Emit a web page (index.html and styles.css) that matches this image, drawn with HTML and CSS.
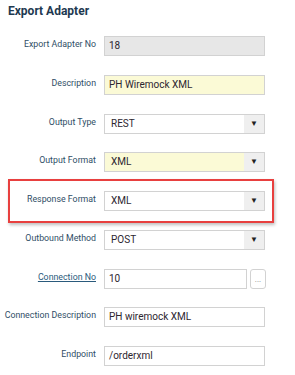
FILE: index.html
```html
<!DOCTYPE html>
<html>
<head>
    <title>Export Adapter</title>
    <link rel="stylesheet" href="styles.css">
</head>
<body>
    <h1 class="title">Export Adapter</h1>

    <div class="form">
        <div class="row">
            <label class="lbl">Export Adapter No</label>
            <div class="field readonly">18</div>
        </div>
        <div class="row">
            <label class="lbl">Description</label>
            <div class="field required">PH Wiremock XML</div>
        </div>
        <div class="row">
            <label class="lbl">Output Type</label>
            <div class="field select"><span class="val">REST</span><span class="arrow">&#9660;</span></div>
        </div>
        <div class="row">
            <label class="lbl">Output Format</label>
            <div class="field select required"><span class="val">XML</span><span class="arrow">&#9660;</span></div>
        </div>
        <div class="row hl">
            <label class="lbl">Response Format</label>
            <div class="field select"><span class="val">XML</span><span class="arrow">&#9660;</span></div>
        </div>
        <div class="row">
            <label class="lbl">Outbound Method</label>
            <div class="field select"><span class="val">POST</span><span class="arrow">&#9660;</span></div>
        </div>
        <div class="row">
            <label class="lbl link">Connection No</label>
            <div class="field short">10</div>
            <div class="dots">...</div>
        </div>
        <div class="row">
            <label class="lbl">Connection Description</label>
            <div class="field">PH wiremock XML</div>
        </div>
        <div class="row">
            <label class="lbl">Endpoint</label>
            <div class="field">/orderxml</div>
        </div>
    </div>
</body>
</html>
```

FILE: styles.css
```css
body { margin: 0; font-family: Roboto, "Liberation Sans", sans-serif; background: #fff; }
.title { margin: 0; padding: 5px 0 0 8px; font-size: 12px; font-weight: bold; color: #1e3950; line-height: 12px; }
.form { display: flex; flex-direction: column; gap: 18.75px; padding-top: 19px; }
.row { display: flex; align-items: center; height: 20px; }
.lbl { width: 96px; text-align: right; font-size: 8.8px; color: #2f4e66; margin-right: 8px; flex: none; white-space: nowrap; position: relative; top: -2px; }
.link { text-decoration: underline; color: #2a5a7c; }
.field { box-sizing: border-box; width: 161px; height: 20px; border: 1px solid #d2d2d2; background: #fff; font-size: 10px; color: #2d2630; padding: 0 4px; line-height: 18px; display: flex; }
.readonly { background: #e7e7e7; }
.required { background: #fbfad6; }
.select { padding: 0; }
.select .val { flex: 1; padding-left: 6px; }
.arrow { width: 20px; background: #efefef; text-align: center; font-size: 8px; color: #222; }
.short { width: 143px; }
.dots { box-sizing: border-box; width: 16px; height: 20px; margin-left: 3px; border: 1px solid #d2d2d2; border-radius: 3px; font-size: 8px; color: #888; text-align: center; line-height: 20px; }
.hl { margin: -12px 21px -12px 8px; padding: 10px 0; border: 2px solid #e8403f; box-shadow: 1px 2px 3px rgba(0,0,0,0.25); }
.hl .lbl { width: 86px; }
```
